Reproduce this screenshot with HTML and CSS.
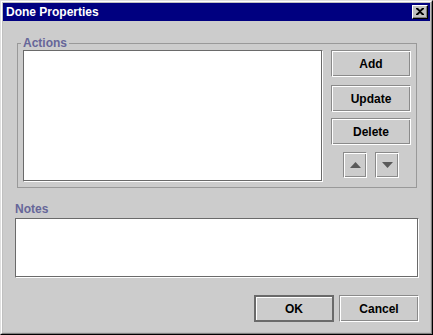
FILE: index.html
```html
<!DOCTYPE html>
<html>
<head>
<meta charset="utf-8">
<title>Done Properties</title>
<link rel="stylesheet" href="styles.css">
</head>
<body>
<div class="window">
  <div class="frame">
    <div class="titlebar">
      <span class="title">Done Properties</span>
      <button class="close" aria-label="Close">
        <svg width="8" height="7" viewBox="0 0 8 7"><path d="M0 0h2l2 2 2-2h2v1L5 3.5 8 6v1H6L4 5 2 7H0V6l3-2.5L0 1z" fill="#000"/></svg>
      </button>
    </div>
    <div class="content">
      <div class="group">
        <span class="group-label">Actions</span>
        <div class="list"></div>
        <div class="side">
          <button class="btn add">Add</button>
          <button class="btn update">Update</button>
          <button class="btn delete">Delete</button>
          <div class="arrows">
            <button class="btn arrow" aria-label="Move up">
              <svg width="11" height="6" viewBox="0 0 11 6"><path d="M5.5 0L11 6H0z" fill="#5a5a5a"/></svg>
            </button>
            <button class="btn arrow" aria-label="Move down">
              <svg width="11" height="6" viewBox="0 0 11 6"><path d="M0 0h11L5.5 6z" fill="#5a5a5a"/></svg>
            </button>
          </div>
        </div>
      </div>
      <div class="notes-label">Notes</div>
      <div class="notes"></div>
      <div class="footer">
        <button class="btn dlg default">OK</button>
        <button class="btn dlg">Cancel</button>
      </div>
    </div>
  </div>
</div>
</body>
</html>
```
FILE: styles.css
```css
html, body {
  margin: 0;
  padding: 0;
  background: #cccccc;
}

.window {
  width: 433px;
  height: 335px;
  box-sizing: border-box;
  border-style: solid;
  border-width: 1px;
  border-color: #dfdfdf #000000 #000000 #dfdfdf;
  font-family: "Liberation Sans", Arial, sans-serif;
}

.frame {
  height: 100%;
  box-sizing: border-box;
  border-style: solid;
  border-width: 1px;
  border-color: #ffffff #808080 #808080 #ffffff;
  padding: 1px;
  background: #c0c0c0;
  display: flex;
  flex-direction: column;
}

.titlebar {
  height: 18px;
  background: #000080;
  display: flex;
  align-items: center;
  justify-content: space-between;
  padding: 0 2px 0 3px;
  flex: none;
}

.title {
  color: #ffffff;
  font-weight: bold;
  font-size: 12px;
  line-height: 14px;
}

.close {
  width: 16px;
  height: 14px;
  box-sizing: border-box;
  padding: 0;
  margin: 0;
  background: #c0c0c0;
  border-style: solid;
  border-width: 1px;
  border-color: #ffffff #000000 #000000 #ffffff;
  box-shadow: inset -1px -1px 0 #808080;
  display: flex;
  align-items: center;
  justify-content: center;
}

.close svg { display: block; margin: 0 0 1px 0; }

.content {
  flex: 1;
  background: #cccccc;
  padding: 22px 11px 0 12px;
  display: flex;
  flex-direction: column;
}

.group {
  position: relative;
  margin: 0 2px;
  border: 1px solid #999999;
  padding: 6px 5px 5px 5px;
  display: flex;
  gap: 8px;
}

.group-label,
.notes-label {
  color: #666699;
  font-weight: bold;
  font-size: 12px;
  line-height: 14px;
}

.group-label {
  position: absolute;
  top: -8px;
  left: 3px;
  padding: 0 2px;
  background: #cccccc;
}

.list,
.notes {
  background: #ffffff;
  box-sizing: border-box;
  border-style: solid;
  border-width: 1px;
  border-color: #6a6a6a #ffffff #ffffff #6a6a6a;
  box-shadow: inset -1px -1px 0 #6a6a6a;
}

.list {
  width: 300px;
  height: 132px;
}

.side {
  width: 80px;
  display: flex;
  flex-direction: column;
}

.btn {
  box-sizing: border-box;
  margin: 0;
  padding: 0;
  background: #cccccc;
  border-style: solid;
  border-width: 1px;
  border-color: #8a8a8a #ffffff #ffffff #8a8a8a;
  box-shadow: inset 1px 1px 0 #ffffff, inset -1px -1px 0 #8a8a8a;
  font-family: "Liberation Sans", Arial, sans-serif;
  font-weight: bold;
  font-size: 12px;
  color: #000000;
  display: flex;
  align-items: center;
  justify-content: center;
}

.side .btn:not(.arrow) {
  width: 80px;
  height: 27px;
}

.update { margin-top: 8px; }
.delete { margin-top: 6px; }

.arrows {
  margin-top: 7px;
  display: flex;
  justify-content: center;
  gap: 8px;
}

.arrow {
  width: 24px;
  height: 26px;
}

.arrow svg { display: block; }

.notes-label {
  margin-top: 14px;
}

.notes {
  margin-top: 2px;
  height: 60px;
}

.footer {
  margin-top: 17px;
  display: flex;
  justify-content: flex-end;
  gap: 5px;
}

.dlg {
  width: 80px;
  height: 27px;
}

.dlg.default {
  border: 2px solid #6a6a6a;
  box-shadow: inset 1px 1px 0 #ffffff;
}
```
